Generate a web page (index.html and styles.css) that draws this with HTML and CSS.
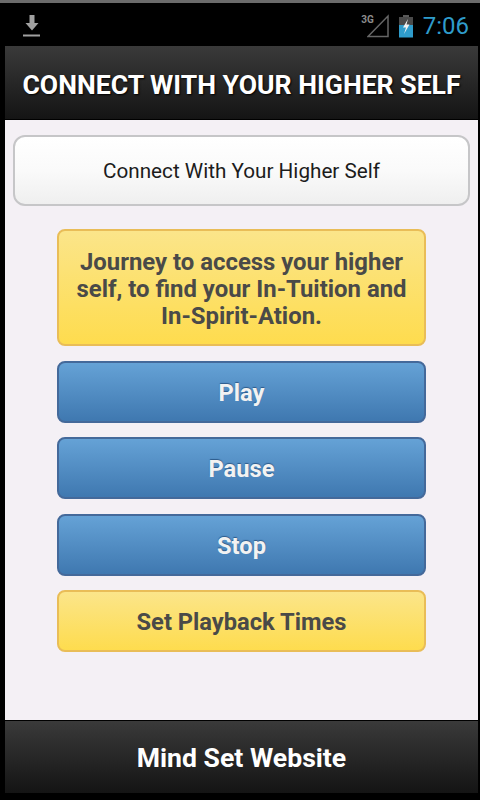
FILE: index.html
```html
<!DOCTYPE html>
<html lang="en">
<head>
    <meta charset="UTF-8">
    <meta name="viewport" content="width=device-width, initial-scale=1.0">
    <title>Connect With Your Higher Self</title>
    <link rel="stylesheet" href="styles.css">
</head>
<body>
    <div class="status-bar">
        <svg class="icon-download" width="20" height="24" viewBox="0 0 20 24">
            <path d="M7.500 1h5v8h4l-6.500 7.500-6.500-7.500h4z" fill="#a0a0a0"/>
            <rect x="1" y="20.500" width="17" height="2" fill="#a0a0a0"/>
        </svg>
        <div class="status-right">
            <span class="net-label">3G</span>
            <svg class="icon-signal" width="22" height="24" viewBox="0 0 22 24">
                <path d="M1 22.500 21 2v20.500z" fill="none" stroke="#666" stroke-width="1.500"/>
            </svg>
            <svg class="icon-battery" width="16" height="24" viewBox="0 0 16 24">
                <rect x="5" y="1" width="6" height="3" fill="#5a5a5a"/>
                <rect x="1" y="3" width="14" height="8" fill="#4a4a4a"/>
                <rect x="1" y="11" width="14" height="12.500" fill="#2f9ccb"/>
                <path d="M10 5 5 13.500h3l-2 6.500 5.500-9.500h-3z" fill="#f2f2f2"/>
            </svg>
            <span class="clock">7:06</span>
        </div>
    </div>

    <div class="app">
        <header class="title-bar">
            <h1>CONNECT WITH YOUR HIGHER SELF</h1>
        </header>

        <main class="content">
            <div class="subtitle-card">Connect With Your Higher Self</div>
            <div class="actions">
                <div class="btn btn-yellow btn-intro">Journey to access your higher self, to find your In-Tuition and In-Spirit-Ation.</div>
                <a href="#" class="btn btn-blue">Play</a>
                <a href="#" class="btn btn-blue">Pause</a>
                <a href="#" class="btn btn-blue">Stop</a>
                <a href="#" class="btn btn-yellow">Set Playback Times</a>
            </div>
        </main>

        <footer class="bottom-bar">Mind Set Website</footer>
    </div>
</body>
</html>
```

FILE: styles.css
```css
* {
    margin: 0;
    padding: 0;
    box-sizing: border-box;
}
html, body {
    height: 100%;
}
body {
    width: 480px;
    height: 800px;
    overflow: hidden;
    background: #000;
    font-family: Roboto, 'Liberation Sans', sans-serif;
    display: flex;
    flex-direction: column;
    border-top: 3px solid #6b6b6b;
}
.status-bar {
    height: 43px;
    flex: none;
    display: flex;
    justify-content: space-between;
    align-items: center;
    padding: 2px 11px 0 22px;
}
.status-right {
    display: flex;
    align-items: center;
}
.net-label {
    font-size: 10px;
    font-weight: 700;
    color: #8c8c8c;
    margin: 0 -7px 12px 0;
}
.icon-signal {
    margin-right: 9px;
}
.icon-battery {
    margin-right: 9px;
}
.clock {
    font-size: 24px;
    color: #2f9ccb;
    line-height: 24px;
}
.app {
    flex: 1;
    display: flex;
    flex-direction: column;
    margin: 0 2px 7px 5px;
}
.title-bar {
    height: 74px;
    flex: none;
    background: linear-gradient(180deg, #3a3a3a 0%, #141414 100%);
    border-bottom: 1px solid #000;
    display: flex;
    align-items: center;
    justify-content: center;
    padding-top: 3px;
}
h1 {
    font-size: 26.6px;
    font-weight: 700;
    color: #fff;
    white-space: nowrap;
    text-shadow: 1px 1px 2px #000;
}
.content {
    flex: 1;
    background: #f4f0f5;
    padding: 15px 8px 0;
}
.subtitle-card {
    height: 71px;
    background: linear-gradient(180deg, #fff 0%, #fafafa 50%, #efefef 100%);
    border: 2px solid #c6c6c8;
    border-radius: 12px;
    display: flex;
    align-items: center;
    justify-content: center;
    font-size: 20.7px;
    color: #1c1c1c;
}
.actions {
    display: flex;
    flex-direction: column;
    gap: 14.5px;
    margin: 23px 44px 0;
}
.btn {
    height: 62px;
    border-radius: 8px;
    display: flex;
    align-items: center;
    justify-content: center;
    text-align: center;
    text-decoration: none;
    font-size: 23.7px;
    font-weight: 700;
    padding-top: 2px;
}
.btn-blue {
    background: linear-gradient(180deg, #65a2d6 0%, #3f78b0 100%);
    border: 2px solid #44699a;
    color: #f2f2f2;
    text-shadow: 0 -1px 1px #2d5a8a;
}
.btn-yellow {
    background: linear-gradient(180deg, #fbe58a 0%, #fedc4e 100%);
    border: 2px solid #e9bd57;
    color: #4a4a48;
}
.btn-intro {
    height: 117px;
    padding: 3px 14px 0;
    font-size: 23.9px;
    line-height: 27px;
}
.bottom-bar {
    height: 73px;
    flex: none;
    background: linear-gradient(180deg, #3a3a3a 0%, #141414 100%);
    border-top: 1px solid #000;
    display: flex;
    align-items: center;
    justify-content: center;
    font-size: 26.6px;
    font-weight: 700;
    color: #fff;
}
```
